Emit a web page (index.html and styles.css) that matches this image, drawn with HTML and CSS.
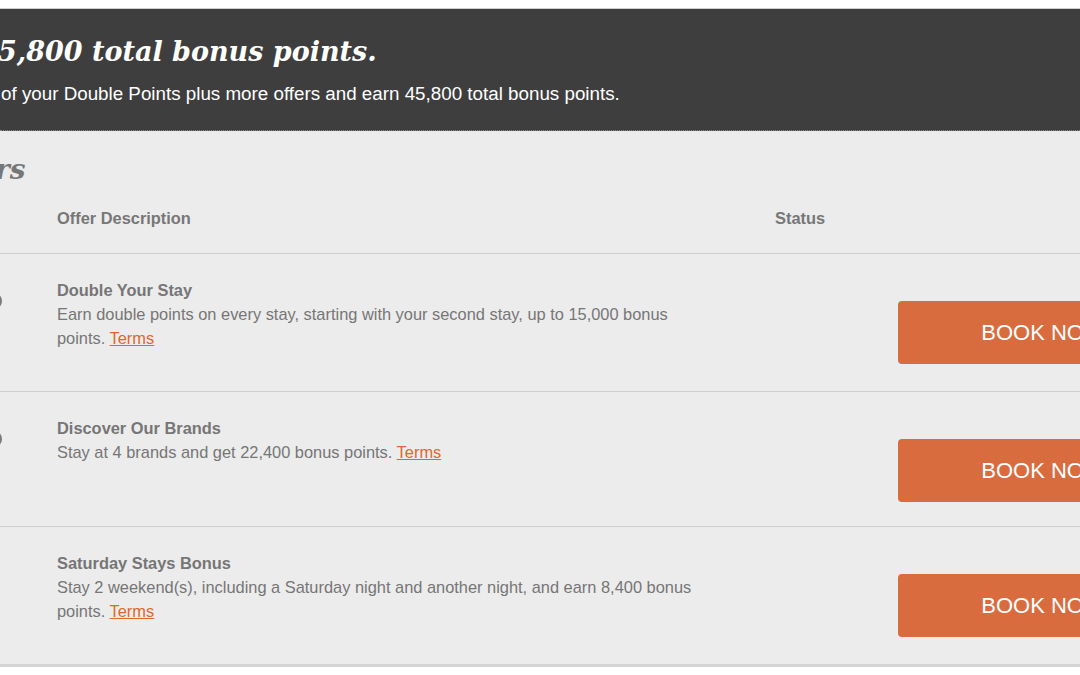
FILE: index.html
```html
<!DOCTYPE html>
<html lang="en">
<head>
<meta charset="utf-8">
<title>Bonus offers</title>
<link rel="stylesheet" href="styles.css">
</head>
<body>
<div class="topbar"></div>
<header class="hero">
  <h1 class="hero-title">5,800 total bonus points.</h1>
  <p class="hero-sub">of your Double Points plus more offers and earn 45,800 total bonus points.</p>
</header>
<main class="offers">
  <h2 class="offers-title">rs</h2>
  <div class="grid head">
    <div class="cell-mark"></div>
    <div class="col-desc">Offer Description</div>
    <div class="col-status">Status</div>
    <div class="col-action"></div>
  </div>
  <div class="grid row">
    <div class="cell-mark"><span class="mark"></span></div>
    <div class="col-desc">
      <div class="offer-name">Double Your Stay</div>
      <p class="offer-text">Earn double points on every stay, starting with your second stay, up to 15,000 bonus points. <a href="#" class="terms">Terms</a></p>
    </div>
    <div class="col-status"></div>
    <div class="col-action"><a href="#" class="book">BOOK NOW</a></div>
  </div>
  <div class="grid row row-short">
    <div class="cell-mark"><span class="mark"></span></div>
    <div class="col-desc">
      <div class="offer-name">Discover Our Brands</div>
      <p class="offer-text">Stay at 4 brands and get 22,400 bonus points. <a href="#" class="terms">Terms</a></p>
    </div>
    <div class="col-status"></div>
    <div class="col-action"><a href="#" class="book">BOOK NOW</a></div>
  </div>
  <div class="grid row">
    <div class="cell-mark"></div>
    <div class="col-desc">
      <div class="offer-name">Saturday Stays Bonus</div>
      <p class="offer-text">Stay 2 weekend(s), including a Saturday night and another night, and earn 8,400 bonus points. <a href="#" class="terms">Terms</a></p>
    </div>
    <div class="col-status"></div>
    <div class="col-action"><a href="#" class="book">BOOK NOW</a></div>
  </div>
</main>
</body>
</html>
```
FILE: styles.css
```css
html, body {
  margin: 0;
  padding: 0;
  background: #ffffff;
  overflow: hidden;
}
body {
  font-family: "Liberation Sans", Arial, sans-serif;
  width: 1080px;
  height: 675px;
}
.topbar {
  height: 8px;
  background: #ffffff;
  border-bottom: 1px solid #cfcfcf;
}
.hero {
  background: #3e3e3e;
  height: 122px;
  box-sizing: border-box;
  padding-top: 25px;
  border-bottom: 1px dotted #8a8a8a;
  color: #ffffff;
  overflow: hidden;
}
.hero-title {
  margin: 0 0 0 -2px;
  font-family: "DejaVu Serif", "Liberation Serif", Georgia, serif;
  font-style: italic;
  font-weight: bold;
  font-size: 27px;
  line-height: 36px;
  white-space: nowrap;
}
.hero-sub {
  margin: 13px 0 0 1px;
  font-size: 18.8px;
  line-height: 22px;
  white-space: nowrap;
}
.offers {
  background: #ececec;
  padding-top: 22px;
  border-bottom: 3px solid #d4d4d4;
}
.offers-title {
  margin: 0 0 0 -5px;
  font-family: "DejaVu Serif", "Liberation Serif", Georgia, serif;
  font-style: italic;
  font-weight: bold;
  font-size: 28px;
  line-height: 34px;
  color: #777777;
}
.grid {
  display: grid;
  grid-template-columns: 57px 718px 123px 1fr;
  border-bottom: 1px solid #cfcfcf;
}
.head {
  margin-top: 21px;
  padding-bottom: 22px;
  font-weight: bold;
  font-size: 16.4px;
  line-height: 20px;
  color: #777777;
}
.row {
  padding: 24px 0 27px 0;
  color: #767676;
  font-size: 16.4px;
  line-height: 24px;
}
.row-short {
  padding-bottom: 24px;
}
.row:last-child {
  border-bottom: none;
}
.mark {
  display: block;
  margin: 15px 0 0 -12px;
  width: 10px;
  height: 12px;
  border: 2px solid #7a7a7a;
  border-radius: 50%;
}
.col-desc {
  padding-right: 60px;
}
.offer-name {
  font-weight: bold;
}
.offer-text {
  margin: 0;
}
.terms {
  color: #e0662e;
  text-decoration: underline;
}
.col-action {
  padding-top: 23px;
}
.book {
  display: flex;
  align-items: center;
  justify-content: center;
  width: 290px;
  height: 63px;
  background: #d96c3f;
  border-radius: 4px;
  color: #ffffff;
  text-decoration: none;
  font-size: 22px;
}
```
